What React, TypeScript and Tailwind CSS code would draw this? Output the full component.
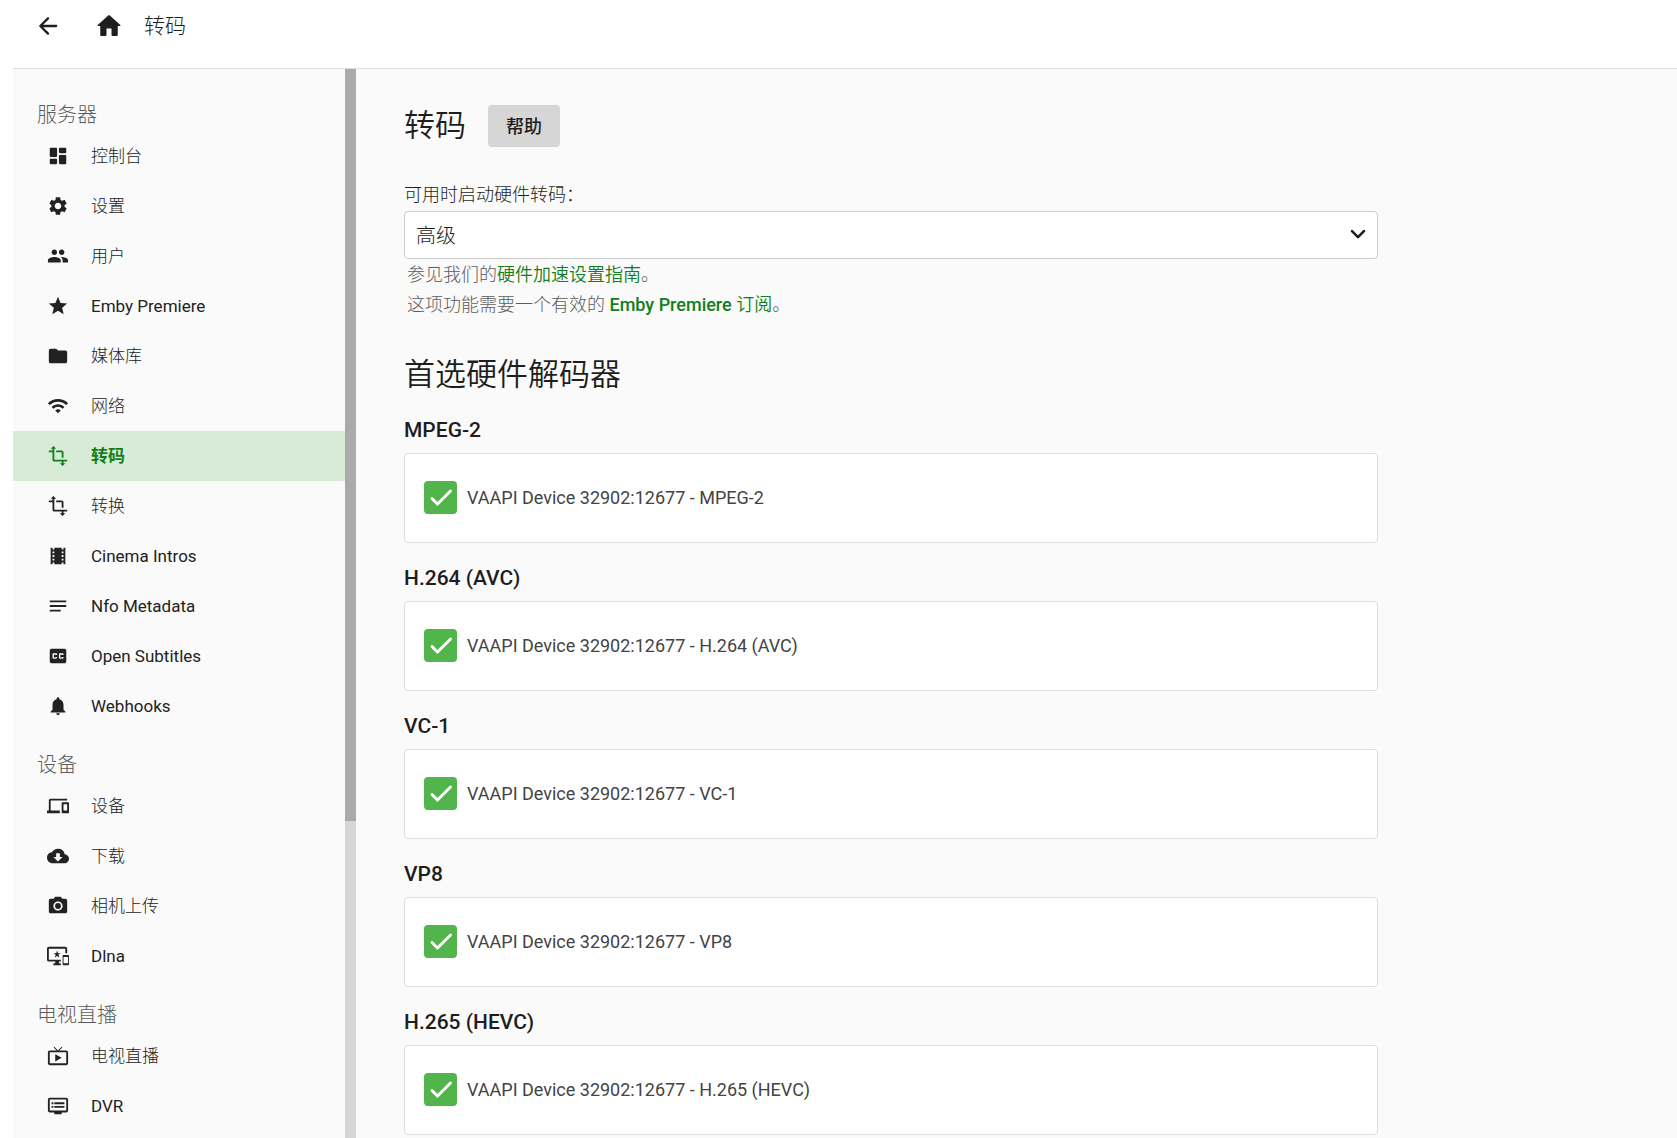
import { useState } from "react";
import type { ReactNode } from "react";
import type { IconType } from "react-icons";
import clsx from "clsx";
import {
  MdCameraAlt,
  MdClosedCaption,
  MdCloudDownload,
  MdDevices,
  MdDvr,
  MdFolder,
  MdImportantDevices,
  MdLiveTv,
  MdNotes,
  MdNotifications,
  MdPeople,
  MdSettings,
  MdStar,
  MdTheaters,
  MdTransform,
  MdWifi,
} from "react-icons/md";

type IconProps = { className?: string };

const BackIcon = ({ className }: IconProps) => (
  <svg viewBox="0 0 24 24" fill="currentColor" className={className}>
    <path d="M19 11H7.83l4.88-4.88c.39-.39.39-1.03 0-1.42-.39-.39-1.02-.39-1.41 0l-6.59 6.59c-.39.39-.39 1.02 0 1.41l6.59 6.59c.39.39 1.02.39 1.41 0 .39-.39.39-1.02 0-1.41L7.83 13H19c.55 0 1-.45 1-1s-.45-1-1-1z" />
  </svg>
);

const HomeIcon = ({ className }: IconProps) => (
  <svg viewBox="0 0 24 24" fill="currentColor" className={className}>
    <path d="M10 19v-5h4v5c0 .55.45 1 1 1h3c.55 0 1-.45 1-1v-7h1.7c.46 0 .68-.57.33-.87L12.67 3.6c-.38-.34-.96-.34-1.34 0l-8.36 7.53c-.34.3-.13.87.33.87H5v7c0 .55.45 1 1 1h3c.55 0 1-.45 1-1z" />
  </svg>
);

const DashboardIcon = ({ className }: IconProps) => (
  <svg viewBox="0 0 24 24" fill="currentColor" className={className}>
    <path d="M4 13h6c.55 0 1-.45 1-1V4c0-.55-.45-1-1-1H4c-.55 0-1 .45-1 1v8c0 .55.45 1 1 1zm0 8h6c.55 0 1-.45 1-1v-4c0-.55-.45-1-1-1H4c-.55 0-1 .45-1 1v4c0 .55.45 1 1 1zm10 0h6c.55 0 1-.45 1-1v-8c0-.55-.45-1-1-1h-6c-.55 0-1 .45-1 1v8c0 .55.45 1 1 1zM13 4v4c0 .55.45 1 1 1h6c.55 0 1-.45 1-1V4c0-.55-.45-1-1-1h-6c-.55 0-1 .45-1 1z" />
  </svg>
);

type NavItem = {
  label: string;
  icon: IconType | typeof DashboardIcon;
  active?: boolean;
};

const sections: { title: string; items: NavItem[] }[] = [
  {
    title: "服务器",
    items: [
      { label: "控制台", icon: DashboardIcon },
      { label: "设置", icon: MdSettings },
      { label: "用户", icon: MdPeople },
      { label: "Emby Premiere", icon: MdStar },
      { label: "媒体库", icon: MdFolder },
      { label: "网络", icon: MdWifi },
      { label: "转码", icon: MdTransform, active: true },
      { label: "转换", icon: MdTransform },
      { label: "Cinema Intros", icon: MdTheaters },
      { label: "Nfo Metadata", icon: MdNotes },
      { label: "Open Subtitles", icon: MdClosedCaption },
      { label: "Webhooks", icon: MdNotifications },
    ],
  },
  {
    title: "设备",
    items: [
      { label: "设备", icon: MdDevices },
      { label: "下载", icon: MdCloudDownload },
      { label: "相机上传", icon: MdCameraAlt },
      { label: "Dlna", icon: MdImportantDevices },
    ],
  },
  {
    title: "电视直播",
    items: [
      { label: "电视直播", icon: MdLiveTv },
      { label: "DVR", icon: MdDvr },
    ],
  },
];

const codecs = ["MPEG-2", "H.264 (AVC)", "VC-1", "VP8", "H.265 (HEVC)"];

const NavLink = ({ label, icon: Icon, active }: NavItem) => (
  <a
    href="#"
    aria-current={active ? "page" : undefined}
    className={clsx(
      "flex h-[50px] items-center gap-[22px] pl-[34px] text-[17px]",
      active
        ? "bg-[#d8ebd7] font-[Roboto,'Noto_Sans_CJK_SC',sans-serif] font-bold text-[#127f1a]"
        : "text-[#222]"
    )}
  >
    <Icon className="size-[22px] shrink-0" />
    <span className="pt-0.5">{label}</span>
  </a>
);

const Sidebar = () => (
  <div className="flex w-[343px] shrink-0">
    <nav className="grow overflow-hidden pt-3">
      {sections.map((section) => (
        <div key={section.title}>
          <h2 className="pt-5 pb-0.5 pl-6 text-[20px] leading-7 text-[#5c5c5c]">
            {section.title}
          </h2>
          {section.items.map((item) => (
            <NavLink key={item.label} {...item} />
          ))}
        </div>
      ))}
    </nav>
    <div className="flex w-[11px] flex-col">
      <div className="flex-19 bg-[#aaa]" />
      <div className="flex-8 bg-[#d6d6d6]" />
    </div>
  </div>
);

const PageHeading = ({ children }: { children: ReactNode }) => (
  <h2 className="font-[Roboto,'Noto_Sans_CJK_SC_DemiLight','Noto_Sans_CJK_SC',sans-serif] text-[31px] leading-10">
    {children}
  </h2>
);

const HelpLink = ({ children }: { children: ReactNode }) => (
  <a
    href="#"
    className="font-[Roboto,'Noto_Sans_CJK_SC_DemiLight','Noto_Sans_CJK_SC',sans-serif] text-[#127f1a]"
  >
    {children}
  </a>
);

const CodecSection = ({ codec }: { codec: string }) => {
  const [checked, setChecked] = useState(true);

  return (
    <section>
      <h3 className="pt-5 pb-2 text-[21px] leading-[30px] font-medium">
        {codec}
      </h3>
      <div className="flex h-[90px] items-center rounded border border-[#ddd] bg-white px-[19px] pb-0.5">
        <label className="flex items-center gap-2.5 text-[18px] text-[#444]">
          <span className="relative size-[33px]">
            <input
              type="checkbox"
              checked={checked}
              onChange={(e) => setChecked(e.target.checked)}
              className="peer block size-[33px] appearance-none rounded border-2 border-gray-400 bg-white checked:border-[#52b54b] checked:bg-[#52b54b]"
            />
            <svg
              viewBox="0 0 33 33"
              fill="none"
              stroke="currentColor"
              strokeWidth="3"
              strokeLinecap="round"
              className="pointer-events-none absolute inset-0 hidden text-white peer-checked:block"
            >
              <path d="M8 17.5 13.5 23 26.5 10" />
            </svg>
          </span>
          VAAPI Device 32902:12677 - {codec}
        </label>
      </div>
    </section>
  );
};

export default function App() {
  return (
    <div className="flex h-screen flex-col overflow-hidden bg-white pl-[13px] font-[Roboto,'Noto_Sans_CJK_SC_Light','Noto_Sans_CJK_SC',sans-serif] text-[#1e1e1e]">
      <header className="flex h-[69px] shrink-0 items-center border-b border-[#ddd] pb-4">
        <button type="button" aria-label="返回" className="ml-[21px]">
          <BackIcon className="size-7" />
        </button>
        <button type="button" aria-label="主页" className="ml-8">
          <HomeIcon className="size-[30px]" />
        </button>
        <h1 className="ml-5 text-[21px] leading-7">转码</h1>
      </header>
      <div className="flex min-h-0 grow bg-[#fafafa]">
        <Sidebar />
        <main className="min-w-0 grow overflow-hidden pt-9 pr-12 pl-12">
          <div className="max-w-[974px]">
            <div className="flex h-[42px] items-center gap-[22px]">
              <PageHeading>转码</PageHeading>
              <button
                type="button"
                className="h-[42px] w-[72px] rounded bg-[#d6d6d6] font-[Roboto,'Noto_Sans_CJK_SC',sans-serif] text-[18px] font-medium"
              >
                帮助
              </button>
            </div>
            <label
              htmlFor="hwaccel"
              className="mt-8 block text-[18px] leading-8"
            >
              可用时启动硬件转码：
            </label>
            <div className="relative">
              <select
                id="hwaccel"
                defaultValue="advanced"
                className="block h-12 w-full appearance-none rounded border border-[#ccc] bg-white px-[11px] pt-0.5 text-[20px]"
              >
                <option value="no">否</option>
                <option value="yes">是</option>
                <option value="advanced">高级</option>
              </select>
              <svg
                viewBox="0 0 24 24"
                fill="none"
                stroke="currentColor"
                strokeWidth="2.6"
                strokeLinecap="round"
                strokeLinejoin="round"
                className="pointer-events-none absolute top-[11px] right-2 size-6"
              >
                <path d="m6 9.2 6 6 6-6" />
              </svg>
            </div>
            <div className="pt-px pb-[35px] pl-[3px] text-[18px] leading-[30px] text-[#5c5c5c]">
              <p>
                参见我们的<HelpLink>硬件加速设置指南</HelpLink>。
              </p>
              <p>
                这项功能需要一个有效的{" "}
                <HelpLink>
                  <span className="font-medium">Emby Premiere</span> 订阅
                </HelpLink>
                。
              </p>
            </div>
            <PageHeading>首选硬件解码器</PageHeading>
            {codecs.map((codec) => (
              <CodecSection key={codec} codec={codec} />
            ))}
          </div>
        </main>
      </div>
    </div>
  );
}
